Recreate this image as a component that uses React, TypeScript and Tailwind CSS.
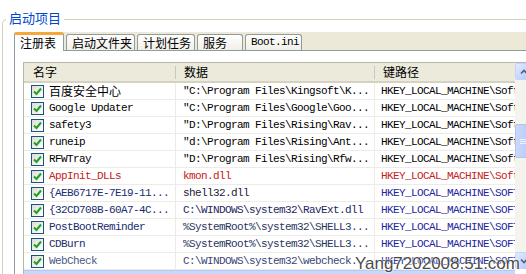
import React from 'react'

const mono = "font-['Liberation_Mono','Noto_Sans_CJK_SC',monospace] text-[11px] tracking-[-0.6px]"
const cjk = "font-['Noto_Sans_CJK_SC',sans-serif] text-[12px] tracking-normal"

interface Row {
    name: string
    data: string
    key: string
    nameCls: string
    dataCls: string
    keyCls: string
    cn?: boolean
}

const rows: Row[] = [
    { name: '百度安全中心', data: '"C:\\Program Files\\Kingsoft\\K...', key: 'HKEY_LOCAL_MACHINE\\Software\\Microsoft', nameCls: 'text-black', dataCls: 'text-black', keyCls: 'text-black', cn: true },
    { name: 'Google Updater', data: '"C:\\Program Files\\Google\\Goo...', key: 'HKEY_LOCAL_MACHINE\\Software\\Microsoft', nameCls: 'text-black', dataCls: 'text-black', keyCls: 'text-black' },
    { name: 'safety3', data: '"D:\\Program Files\\Rising\\Rav...', key: 'HKEY_LOCAL_MACHINE\\Software\\Microsoft', nameCls: 'text-black', dataCls: 'text-black', keyCls: 'text-black' },
    { name: 'runeip', data: '"d:\\Program Files\\Rising\\Ant...', key: 'HKEY_LOCAL_MACHINE\\Software\\Microsoft', nameCls: 'text-black', dataCls: 'text-black', keyCls: 'text-black' },
    { name: 'RFWTray', data: '"D:\\Program Files\\Rising\\Rfw...', key: 'HKEY_LOCAL_MACHINE\\Software\\Microsoft', nameCls: 'text-black', dataCls: 'text-black', keyCls: 'text-black' },
    { name: 'AppInit_DLLs', data: 'kmon.dll', key: 'HKEY_LOCAL_MACHINE\\Software\\Microsoft', nameCls: 'text-[#c42020]', dataCls: 'text-[#c42020]', keyCls: 'text-[#c42020]' },
    { name: '{AEB6717E-7E19-11...', data: 'shell32.dll', key: 'HKEY_LOCAL_MACHINE\\SOFTWARE\\Microsoft', nameCls: 'text-[#1a2c6e]', dataCls: 'text-[#1a1a3a]', keyCls: 'text-[#1c24a0]' },
    { name: '{32CD708B-60A7-4C...', data: 'C:\\WINDOWS\\system32\\RavExt.dll', key: 'HKEY_LOCAL_MACHINE\\SOFTWARE\\Microsoft', nameCls: 'text-[#1a2c6e]', dataCls: 'text-[#1c2660]', keyCls: 'text-[#1c24a0]' },
    { name: 'PostBootReminder', data: '%SystemRoot%\\system32\\SHELL3...', key: 'HKEY_LOCAL_MACHINE\\SOFTWARE\\Microsoft', nameCls: 'text-[#1a2c6e]', dataCls: 'text-[#2a3460]', keyCls: 'text-[#1c24a0]' },
    { name: 'CDBurn', data: '%SystemRoot%\\system32\\SHELL3...', key: 'HKEY_LOCAL_MACHINE\\SOFTWARE\\Microsoft', nameCls: 'text-[#1a2c6e]', dataCls: 'text-[#2a3460]', keyCls: 'text-[#1c24a0]' },
    { name: 'WebCheck', data: 'C:\\WINDOWS\\system32\\webcheck...', key: 'HKEY_LOCAL_MACHINE\\SOFTWARE\\Microsoft', nameCls: 'text-[#4a5a88]', dataCls: 'text-[#3a4676]', keyCls: 'text-[#2a34a0]' },
]

const tabs = [
    { t: '启动文件夹', w: 'w-[69px]' },
    { t: '计划任务', w: 'w-[58px]' },
    { t: '服务', w: 'w-[46px]' },
]

function Check() {
    return (
        <div className="w-[13px] h-[13px] shrink-0 border border-[#1c5180] bg-gradient-to-br from-[#dcdcd7] to-white flex items-center justify-center">
            <svg width="9" height="9" viewBox="0 0 9 9">
                <path d="M1 4.5 L3.5 7 L8 1.5" fill="none" stroke="#21a121" strokeWidth="2" />
            </svg>
        </div>
    )
}

function Arrow({ down }: { down?: boolean }) {
    return (
        <div className="h-[17px] w-[17px] rounded-[2px] bg-gradient-to-br from-[#e1eafe] to-[#b4c8f6] border border-[#c3d3fd] flex items-center justify-center">
            <svg width="8" height="6" viewBox="0 0 8 6">
                <path d={down ? 'M1 1.5 L4 4.5 L7 1.5' : 'M1 4.5 L4 1.5 L7 4.5'} fill="none" stroke="#4d6185" strokeWidth="1.6" />
            </svg>
        </div>
    )
}

export default function App() {
    return (
        <div className="w-[526px] h-[274px] bg-white overflow-hidden relative">
            {/* group box */}
            <div className="ml-[2px] mt-[19px] border-l border-t border-[#d0d0bf] rounded-tl-[5px] h-[300px]">
                <div className={`${cjk} text-[13px] text-[#0046d5] leading-[16px] bg-white w-fit px-[3px] ml-[3px] -mt-[10px]`}>启动项目</div>

                {/* tabs */}
                <div className="ml-[11px] mt-[6px] flex items-end h-[18px] bg-[#ece9d8]">
                    <div className={`${cjk} h-[19px] w-[50px] bg-white border-x border-[#919b9c] border-t-[3px] border-t-[#f5a73c] rounded-t-[3px] pl-[5px] leading-[15px] text-black relative top-[1px] z-10`}>注册表</div>
                    {tabs.map(t => (
                        <div key={t.t} className={`${cjk} ${t.w} h-[16px] pl-[5px] ml-[2px] bg-gradient-to-b from-white to-[#f0efe8] border-x border-t border-[#919b9c] rounded-t-[3px] leading-[15px] text-black`}>{t.t}</div>
                    ))}
                    <div className={`${mono} h-[16px] w-[57px] ml-[2px] bg-gradient-to-b from-white to-[#f0efe8] border-x border-t border-[#919b9c] rounded-t-[3px] leading-[15px] text-black pl-[5px]`}>Boot.ini</div>
                </div>

                {/* tab panel */}
                <div className="ml-[11px] border-l border-t border-[#919b9c] pl-[8px] pt-[11px]">
                    <div className="w-[510px] border-l border-t border-[#b8b6a8] flex">
                        <div className="w-[491px] shrink-0">
                            {/* header */}
                            <div className={`${cjk} flex h-[20px] bg-[#ebeadb] border-b-[2px] border-[#d6d2c2] text-black leading-[18px]`}>
                                <div className="w-[152px] pl-[9px] flex justify-between items-center">名字<span className="w-px h-[13px] bg-[#cac8bb]" /></div>
                                <div className="w-[199px] pl-[8px] flex justify-between items-center">数据<span className="w-px h-[13px] bg-[#cac8bb]" /></div>
                                <div className="flex-1 pl-[8px]">键路径</div>
                            </div>
                            {rows.map(r => (
                                <div key={r.name} className={`${mono} flex h-[17px] border-b border-[#ecebe6] leading-[16px]`}>
                                    <div className="w-[152px] shrink-0 pl-[7px] flex items-center gap-[5px] border-r border-[#ecebe6] overflow-hidden whitespace-nowrap">
                                        <Check />
                                        <span className={`${r.cn ? cjk : ''} ${r.nameCls}`}>{r.name}</span>
                                    </div>
                                    <div className={`w-[199px] shrink-0 pl-[7px] border-r border-[#ecebe6] overflow-hidden whitespace-nowrap ${r.dataCls}`}>{r.data}</div>
                                    <div className={`flex-1 pl-[6px] overflow-hidden whitespace-nowrap ${r.keyCls}`}>{r.key}</div>
                                </div>
                            ))}
                            <div className="h-[17px] bg-[#c8d8fb] border-t border-[#b4c8f6]" />
                        </div>
                        {/* vertical scrollbar */}
                        <div className="w-[17px] shrink-0 bg-[#f4f3ee] flex flex-col h-[206px]">
                            <Arrow />
                            <div className="h-[44px]" />
                            <div className="h-[34px] rounded-[2px] bg-gradient-to-r from-[#cad8fc] to-[#b6c9f7] border border-[#b0c4f3] flex flex-col items-center justify-center gap-[1px]">
                                <span className="w-[7px] h-px bg-[#eef3ff]" />
                                <span className="w-[7px] h-px bg-[#eef3ff]" />
                                <span className="w-[7px] h-px bg-[#eef3ff]" />
                            </div>
                            <div className="flex-1" />
                            <Arrow down />
                        </div>
                    </div>
                </div>
            </div>

            {/* watermark */}
            <div className="absolute right-[6px] bottom-[-2px] font-['Liberation_Sans',Arial,sans-serif] text-[17px] text-[#333]/90 [text-shadow:0_0_2px_#fff,0_0_2px_#fff]">Yang7202008.51.com</div>
        </div>
    )
}
